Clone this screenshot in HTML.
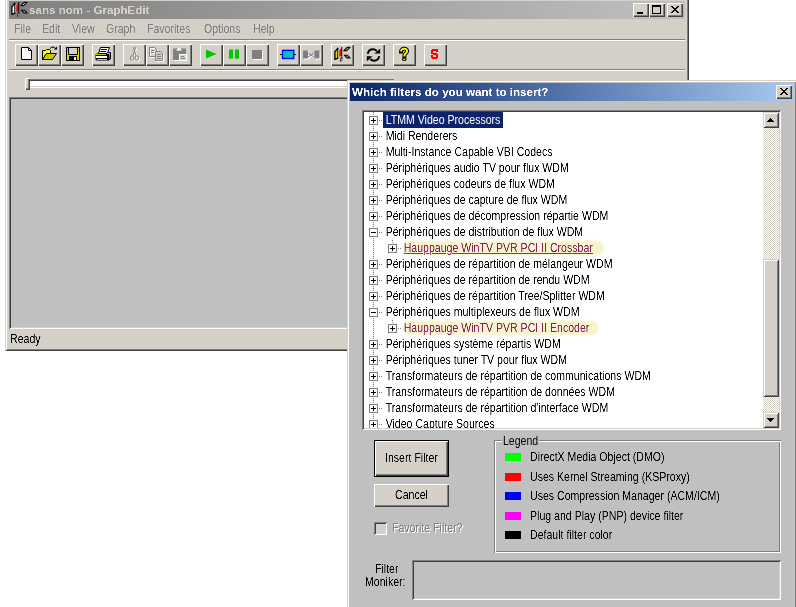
<!DOCTYPE html>
<html><head><meta charset="utf-8">
<style>
*{margin:0;padding:0;box-sizing:border-box}
html,body{width:796px;height:607px;overflow:hidden;background:#fff}
body{position:relative;font-family:"Liberation Sans",sans-serif;font-size:10.5px;color:#000}
.a{position:absolute}
.win{background:#D4D0C8;box-shadow:inset 1px 1px #D4D0C8,inset -1px -1px #404040,inset 2px 2px #fff,inset -2px -2px #808080}
.btn{background:#D4D0C8;box-shadow:inset 1px 1px #fff,inset -1px -1px #404040,inset -2px -2px #808080}
.sunk{box-shadow:inset 1px 1px #808080,inset -1px -1px #fff,inset 2px 2px #404040,inset -2px -2px #D4D0C8}
.t{position:absolute;white-space:nowrap;line-height:12px;font-size:12px;transform:scaleX(.881);transform-origin:0 0;filter:url(#c1)}
.cap{background:#D4D0C8;box-shadow:inset 1px 1px #fff,inset -1px -1px #404040,inset -2px -2px #808080}
.hl{position:absolute;left:0;right:0;height:1px}

.scr{background:repeating-conic-gradient(#D4D0C8 0 25%,#fff 0 50%) 0 0/2px 2px}
.tree{position:absolute;left:364px;top:112px;width:399px;height:316px;overflow:hidden;background:#fff}
.vl{position:absolute;width:1px;background:repeating-linear-gradient(to bottom,#808080 0 1px,transparent 1px 2px)}
.hd{position:absolute;height:1px;background:repeating-linear-gradient(to right,#808080 0 1px,transparent 1px 2px)}
.box{position:absolute;width:9px;height:9px;border:1px solid #808080;background:#fff}
.box i{position:absolute;left:1px;top:3px;width:5px;height:1px;background:#000}
.box i.pm:after{content:"";position:absolute;left:2px;top:-2px;width:1px;height:5px;background:#000}
.ti{position:absolute;white-space:nowrap;line-height:16px;height:16px;padding:0 3px 0 3px;font-size:12px;transform:scaleX(.881);transform-origin:0 0;filter:url(#c1)}
.ti.sel{background:#0A246A;color:#fff;left:19px}
.ti.hi{color:#84205E;text-decoration:underline;text-decoration-color:#9A2A78}
.yh{position:absolute;height:14px;background:#F7F3CC;border-radius:7px;filter:blur(1.2px)}
</style></head><body>
<svg width="0" height="0" style="position:absolute"><filter id="c1"><feComponentTransfer><feFuncA type="linear" slope="2" intercept="-0.5"/></feComponentTransfer></filter></svg>

<!-- GraphEdit main window -->
<div class="a win" style="left:5px;top:-3px;width:684px;height:354px"></div>
<div class="a" style="left:9px;top:1px;width:676px;height:18px;background:linear-gradient(to right,#808080,#C0C0C0)"></div>
<svg class="a" style="left:8px;top:-1px" width="23" height="22" viewBox="0 0 23 22"><path d="M3.9 7.6L6.9 4.2V14.2L3.9 15.4Z" fill="#fff" stroke="#000" stroke-width="1.3" stroke-linejoin="round"/><rect x="7.5" y="5.5" width="0.9" height="8" fill="#fff"/><path d="M8.3 6.6L10.4 4V12L8.3 13Z" fill="#FF0000"/><rect x="10.2" y="3" width="1" height="9.5" fill="#000"/><path d="M9.3 14L11.3 12.4V16.5L9.3 17.9Z" fill="#000"/><rect x="9.9" y="14.6" width="0.9" height="2" fill="#fff"/><path d="M12.8 6.6L16.2 3.4H19L15.6 6.6Z" fill="#E8E8E8" stroke="#000" stroke-width="1.1" stroke-linejoin="round"/><path d="M13.3 11.2H16.1L19 14H16.2Z" fill="#E8E8E8" stroke="#000" stroke-width="1.1" stroke-linejoin="round"/></svg>
<div class="t" style="left:29px;top:4px;font-weight:bold;font-size:11.6px;transform:none;color:#D4D0C8">sans nom - GraphEdit</div>
<div class="a cap" style="left:633px;top:3px;width:16px;height:14px"></div>
<div class="a cap" style="left:649px;top:3px;width:16px;height:14px"></div>
<div class="a cap" style="left:667px;top:3px;width:16px;height:14px"></div>

<!-- menu -->
<div class="t" style="left:14px;top:23px;color:#808080">File</div>
<div class="t" style="left:42px;top:23px;color:#808080">Edit</div>
<div class="t" style="left:72px;top:23px;color:#808080">View</div>
<div class="t" style="left:106px;top:23px;color:#808080">Graph</div>
<div class="t" style="left:147px;top:23px;color:#808080">Favorites</div>
<div class="t" style="left:204px;top:23px;color:#808080">Options</div>
<div class="t" style="left:253px;top:23px;color:#808080">Help</div>

<div class="a" style="left:9px;top:39px;width:676px;height:1px;background:#808080"></div>
<div class="a" style="left:9px;top:40px;width:676px;height:1px;background:#fff"></div>

<!-- toolbar buttons -->
<div class="a btn" style="left:15px;top:44px;width:23px;height:22px"></div>
<div class="a btn" style="left:38px;top:44px;width:23px;height:22px"></div>
<div class="a btn" style="left:61px;top:44px;width:23px;height:22px"></div>
<div class="a btn" style="left:92px;top:44px;width:23px;height:22px"></div>
<div class="a btn" style="left:123px;top:44px;width:23px;height:22px"></div>
<div class="a btn" style="left:146px;top:44px;width:23px;height:22px"></div>
<div class="a btn" style="left:169px;top:44px;width:23px;height:22px"></div>
<div class="a btn" style="left:200px;top:44px;width:23px;height:22px"></div>
<div class="a btn" style="left:223px;top:44px;width:23px;height:22px"></div>
<div class="a btn" style="left:246px;top:44px;width:23px;height:22px"></div>
<div class="a btn" style="left:277px;top:44px;width:23px;height:22px"></div>
<div class="a btn" style="left:300px;top:44px;width:23px;height:22px"></div>
<div class="a btn" style="left:331px;top:44px;width:23px;height:22px"></div>
<div class="a btn" style="left:362px;top:44px;width:23px;height:22px"></div>
<div class="a btn" style="left:393px;top:44px;width:23px;height:22px"></div>
<div class="a btn" style="left:424px;top:44px;width:23px;height:22px"></div>

<!-- ICONS -->
<svg class="a" style="left:15px;top:44px" width="23" height="22" viewBox="0 0 23 22"><path d="M6.5 3.5H13.5L16.5 6.5V15.5H6.5Z" fill="#fff" stroke="#000"/><path d="M13.5 3.5V6.5H16.5" fill="none" stroke="#000"/></svg>
<svg class="a" style="left:38px;top:44px" width="23" height="22" viewBox="0 0 23 22"><path d="M4.5 6.5H7.5L8.5 5.5H11.5L12.5 6.5V9.5H8.5L4.5 15.5Z" fill="#FFFF00" stroke="#000"/><path d="M4.5 15.5L8.5 9.5H18.5L14.5 15.5Z" fill="#C8C800" stroke="#000"/><path d="M12 4.5Q13.5 2 16.5 3.5L17.5 5" fill="none" stroke="#000"/><path d="M16 5.5H19V2.5Z" fill="#000"/></svg>
<svg class="a" style="left:61px;top:44px" width="23" height="22" viewBox="0 0 23 22"><rect x="5.5" y="3.5" width="13" height="13" fill="#D8D800" stroke="#000"/><rect x="8" y="4" width="8" height="6" fill="#D4D0C8"/><path d="M7.5 3.5V10.5H16.5V3.5" fill="none" stroke="#000"/><rect x="8" y="12" width="8" height="5" fill="#000"/><rect x="13" y="13" width="2" height="3" fill="#fff"/><rect x="17" y="4" width="1" height="1" fill="#fff"/></svg>
<svg class="a" style="left:92px;top:44px" width="23" height="22" viewBox="0 0 23 22"><path d="M8.5 3.5H17.5L15.5 9.5H6.5Z" fill="#fff" stroke="#000"/><path d="M9 5.5H15M8.3 7.5H14.3" stroke="#000"/><rect x="3.5" y="9.5" width="14" height="7" rx="1.5" fill="#000"/><rect x="4" y="10" width="10" height="1" fill="#B8D000"/><rect x="4" y="12" width="11" height="2" fill="#fff"/><rect x="5" y="15" width="10" height="1" fill="#B8D000"/><path d="M15 9L18.5 8.5V15L16 16" fill="none" stroke="#000"/><rect x="15" y="9" width="2" height="1" fill="#B8D000"/></svg>
<svg class="a" style="left:123px;top:44px" width="23" height="22" viewBox="0 0 23 22"><g transform="translate(1,1)" fill="#fff" stroke="#fff"><ellipse cx="9.2" cy="14" rx="1.8" ry="2.2" fill="none"/><ellipse cx="13.8" cy="14" rx="1.8" ry="2.2" fill="none"/><path d="M10 11.8L12.6 3.2M13 11.8L10.4 3.2" fill="none"/></g><g fill="#808080" stroke="#808080"><ellipse cx="9.2" cy="14" rx="1.8" ry="2.2" fill="none"/><ellipse cx="13.8" cy="14" rx="1.8" ry="2.2" fill="none"/><path d="M10 11.8L12.6 3.2M13 11.8L10.4 3.2" fill="none"/></g></svg>
<svg class="a" style="left:146px;top:44px" width="23" height="22" viewBox="0 0 23 22"><g transform="translate(1,1)" fill="#fff" stroke="#fff"><path d="M3.5 3.5H8.5L10.5 5.5V12.5H3.5Z" fill="none"/><path d="M9.5 7.5H14.5L16.5 9.5V16.5H9.5Z" fill="#D4D0C8"/><path d="M5 6.5H8M5 8.5H8M11 10.5H15M11 12.5H15M11 14.5H15" fill="none"/></g><g fill="#808080" stroke="#808080"><path d="M3.5 3.5H8.5L10.5 5.5V12.5H3.5Z" fill="none"/><path d="M9.5 7.5H14.5L16.5 9.5V16.5H9.5Z" fill="#D4D0C8"/><path d="M5 6.5H8M5 8.5H8M11 10.5H15M11 12.5H15M11 14.5H15" fill="none"/></g></svg>
<svg class="a" style="left:169px;top:44px" width="23" height="22" viewBox="0 0 23 22"><path d="M5 16.5H10" stroke="#fff"/><path d="M4 5.5Q4 4.5 5 4.5H17V16H4Z" fill="#808080"/><path d="M9.6 3.8H10.6L13.2 6.6H7Z" fill="#fff"/><rect x="10.5" y="10.5" width="7" height="6" fill="#D4D0C8" stroke="#fff"/><path d="M12 12.5H15M12 14.5H16" stroke="#808080"/><rect x="16" y="10" width="1" height="1" fill="#fff"/></svg>
<svg class="a" style="left:200px;top:44px" width="23" height="22" viewBox="0 0 23 22"><path d="M6 5.5L16.5 10L6 14.5Z" fill="#00C800"/></svg>
<svg class="a" style="left:223px;top:44px" width="23" height="22" viewBox="0 0 23 22"><rect x="6" y="5.5" width="4" height="9.2" fill="#00C800"/><rect x="12" y="5.5" width="4" height="9.2" fill="#00C800"/></svg>
<svg class="a" style="left:246px;top:44px" width="23" height="22" viewBox="0 0 23 22"><rect x="7" y="7" width="10" height="9" fill="#fff"/><rect x="6" y="6" width="10" height="9" fill="#808080"/></svg>
<svg class="a" style="left:277px;top:44px" width="23" height="22" viewBox="0 0 23 22"><path d="M3 10.5H19" stroke="#000"/><rect x="5.5" y="6.3" width="11.3" height="8.2" fill="#00C0C0" stroke="#0000FF" stroke-width="1.3"/></svg>
<svg class="a" style="left:300px;top:44px" width="23" height="22" viewBox="0 0 23 22"><g transform="translate(1,1)" fill="#fff" stroke="#fff"><rect x="3.5" y="7" width="4" height="7"/><rect x="15" y="7" width="4" height="7"/><path d="M8 9L14 13M8 13L14 9M7 11H8M14 11H15" fill="none"/></g><g fill="#808080" stroke="#808080"><rect x="3.5" y="7" width="4" height="7"/><rect x="15" y="7" width="4" height="7"/><path d="M8 9L14 13M8 13L14 9M7 11H8M14 11H15" fill="none"/></g></svg>
<svg class="a" style="left:331px;top:44px" width="23" height="22" viewBox="0 0 23 22"><path d="M3.9 7.6L6.9 4.2V14.2L3.9 15.4Z" fill="#E0E000" stroke="#000" stroke-width="1.3" stroke-linejoin="round"/><rect x="7.5" y="5.5" width="0.9" height="8" fill="#fff"/><path d="M8.3 6.6L10.4 4V12L8.3 13Z" fill="#FF0000"/><rect x="10.2" y="3" width="1" height="9.5" fill="#000"/><path d="M9.3 14L11.3 12.4V16.5L9.3 17.9Z" fill="#000"/><rect x="9.9" y="14.6" width="0.9" height="2" fill="#E0E000"/><path d="M12.8 6.6L16.2 3.4H19L15.6 6.6Z" fill="#C8D000" stroke="#000" stroke-width="1.1" stroke-linejoin="round"/><path d="M13.3 11.2H16.1L19 14H16.2Z" fill="#D8D8A0" stroke="#000" stroke-width="1.1" stroke-linejoin="round"/></svg>
<svg class="a" style="left:362px;top:44px" width="23" height="22" viewBox="0 0 23 22"><path d="M5.8 9.8C6.3 6.8 8.5 5.3 11 5.3C12.6 5.3 13.8 6 14.8 7" fill="none" stroke="#000" stroke-width="1.9"/><path d="M12.5 9.6H18.2V4.6Z" fill="#000"/><path d="M17.2 12.2C16.7 15.2 14.5 16.7 12 16.7C10.4 16.7 9.2 16 8.2 15" fill="none" stroke="#000" stroke-width="1.9"/><path d="M10.5 12.3H4.8V17.3Z" fill="#000"/></svg>
<svg class="a" style="left:393px;top:44px" width="23" height="22" viewBox="0 0 23 22"><path d="M8 7.6C8 5.6 9.5 4.6 11.1 4.6C12.9 4.6 14.1 5.7 14.1 7.3C14.1 9 11.4 9.6 11.4 11.6V12.6" fill="none" stroke="#000" stroke-width="3.9" stroke-linecap="square"/><path d="M8 7.6C8 5.6 9.5 4.6 11.1 4.6C12.9 4.6 14.1 5.7 14.1 7.3C14.1 9 11.4 9.6 11.4 11.6V12.6" fill="none" stroke="#FFFF00" stroke-width="1.9"/><ellipse cx="11.3" cy="15.3" rx="2.4" ry="1.6" fill="#000"/><rect x="10.4" y="14.6" width="1.8" height="1.4" fill="#FFFF00"/></svg>
<svg class="a" style="left:424px;top:44px" width="23" height="22" viewBox="0 0 23 22"><g fill="#FF0000" shape-rendering="crispEdges"><rect x="8" y="5" width="5" height="2"/><rect x="7" y="6" width="2" height="4"/><rect x="12" y="5" width="2" height="3"/><rect x="8" y="9" width="2" height="1"/><rect x="9" y="9" width="4" height="2"/><rect x="12" y="10" width="2" height="4"/><rect x="8" y="13" width="5" height="2"/><rect x="7" y="11" width="2" height="3"/></g></svg>
<!-- /ICONS -->
<div class="a" style="left:9px;top:69px;width:676px;height:1px;background:#808080"></div>
<div class="a" style="left:9px;top:70px;width:676px;height:1px;background:#fff"></div>

<!-- trackbar -->
<div class="a sunk" style="left:26px;top:79px;width:368px;height:9px;background:#fff"></div>
<div class="a btn" style="left:25px;top:78px;width:5px;height:12px"></div>

<!-- client area -->
<div class="a sunk" style="left:9px;top:97px;width:676px;height:232px;background:#C0C0C0"></div>
<div class="t" style="left:10px;top:333px">Ready</div>

<!-- Dialog -->
<div class="a win" style="left:347px;top:80px;width:450px;height:540px;background:#C0C0C0"></div>
<div class="a" style="left:350px;top:83px;width:444px;height:18px;background:linear-gradient(to right,#0A246A,#A6CAF0)"></div>
<div class="t" style="left:352px;top:86px;font-weight:bold;font-size:11.6px;transform:none;color:#fff">Which filters do you want to insert?</div>
<div class="a cap" style="left:776px;top:85px;width:16px;height:14px"></div>

<!-- tree -->
<div class="a sunk" style="left:362px;top:110px;width:419px;height:320px;background:#fff"></div>

<div class="tree">
<div class="yh" style="left:39px;top:129px;width:201px"></div>
<div class="yh" style="left:39px;top:209px;width:196px"></div>
<div class="vl" style="left:9px;top:0;height:316px"></div>
<div class="hd" style="left:15px;top:8px;width:4px"></div>
<div class="box" style="left:5px;top:4px"><i class="pm"></i></div>
<div class="ti sel" style="left:19px;top:0px">LTMM Video Processors</div>
<div class="hd" style="left:15px;top:24px;width:4px"></div>
<div class="box" style="left:5px;top:20px"><i class="pm"></i></div>
<div class="ti" style="left:19px;top:16px">Midi Renderers</div>
<div class="hd" style="left:15px;top:40px;width:4px"></div>
<div class="box" style="left:5px;top:36px"><i class="pm"></i></div>
<div class="ti" style="left:19px;top:32px">Multi-Instance Capable VBI Codecs</div>
<div class="hd" style="left:15px;top:56px;width:4px"></div>
<div class="box" style="left:5px;top:52px"><i class="pm"></i></div>
<div class="ti" style="left:19px;top:48px">Périphériques audio TV pour flux WDM</div>
<div class="hd" style="left:15px;top:72px;width:4px"></div>
<div class="box" style="left:5px;top:68px"><i class="pm"></i></div>
<div class="ti" style="left:19px;top:64px">Périphériques codeurs de flux WDM</div>
<div class="hd" style="left:15px;top:88px;width:4px"></div>
<div class="box" style="left:5px;top:84px"><i class="pm"></i></div>
<div class="ti" style="left:19px;top:80px">Périphériques de capture de flux WDM</div>
<div class="hd" style="left:15px;top:104px;width:4px"></div>
<div class="box" style="left:5px;top:100px"><i class="pm"></i></div>
<div class="ti" style="left:19px;top:96px">Périphériques de décompression répartie WDM</div>
<div class="hd" style="left:15px;top:120px;width:4px"></div>
<div class="box" style="left:5px;top:116px"><i class="mm"></i></div>
<div class="ti" style="left:19px;top:112px">Périphériques de distribution de flux WDM</div>
<div class="hd" style="left:34px;top:136px;width:4px"></div>
<div class="vl" style="left:28px;top:128px;height:4px"></div>
<div class="box" style="left:24px;top:132px"><i class="pm"></i></div>
<div class="ti hi" style="left:37px;top:128px">Hauppauge WinTV PVR PCI II Crossbar</div>
<div class="hd" style="left:15px;top:152px;width:4px"></div>
<div class="box" style="left:5px;top:148px"><i class="pm"></i></div>
<div class="ti" style="left:19px;top:144px">Périphériques de répartition de mélangeur WDM</div>
<div class="hd" style="left:15px;top:168px;width:4px"></div>
<div class="box" style="left:5px;top:164px"><i class="pm"></i></div>
<div class="ti" style="left:19px;top:160px">Périphériques de répartition de rendu WDM</div>
<div class="hd" style="left:15px;top:184px;width:4px"></div>
<div class="box" style="left:5px;top:180px"><i class="pm"></i></div>
<div class="ti" style="left:19px;top:176px">Périphériques de répartition Tree/Splitter WDM</div>
<div class="hd" style="left:15px;top:200px;width:4px"></div>
<div class="box" style="left:5px;top:196px"><i class="mm"></i></div>
<div class="ti" style="left:19px;top:192px">Périphériques multiplexeurs de flux WDM</div>
<div class="hd" style="left:34px;top:216px;width:4px"></div>
<div class="vl" style="left:28px;top:208px;height:4px"></div>
<div class="box" style="left:24px;top:212px"><i class="pm"></i></div>
<div class="ti hi" style="left:37px;top:208px;text-decoration:none">Hauppauge WinTV PVR PCI II Encoder</div>
<div class="hd" style="left:15px;top:232px;width:4px"></div>
<div class="box" style="left:5px;top:228px"><i class="pm"></i></div>
<div class="ti" style="left:19px;top:224px">Périphériques système répartis WDM</div>
<div class="hd" style="left:15px;top:248px;width:4px"></div>
<div class="box" style="left:5px;top:244px"><i class="pm"></i></div>
<div class="ti" style="left:19px;top:240px">Périphériques tuner TV pour flux WDM</div>
<div class="hd" style="left:15px;top:264px;width:4px"></div>
<div class="box" style="left:5px;top:260px"><i class="pm"></i></div>
<div class="ti" style="left:19px;top:256px">Transformateurs de répartition de communications WDM</div>
<div class="hd" style="left:15px;top:280px;width:4px"></div>
<div class="box" style="left:5px;top:276px"><i class="pm"></i></div>
<div class="ti" style="left:19px;top:272px">Transformateurs de répartition de données WDM</div>
<div class="hd" style="left:15px;top:296px;width:4px"></div>
<div class="box" style="left:5px;top:292px"><i class="pm"></i></div>
<div class="ti" style="left:19px;top:288px">Transformateurs de répartition d'interface WDM</div>
<div class="hd" style="left:15px;top:312px;width:4px"></div>
<div class="box" style="left:5px;top:308px"><i class="pm"></i></div>
<div class="ti" style="left:19px;top:304px">Video Capture Sources</div>
</div>
<!-- scrollbar -->
<div class="a scr" style="left:763px;top:112px;width:16px;height:316px"></div>
<div class="a win" style="left:763px;top:112px;width:16px;height:16px"></div>
<div class="a win" style="left:763px;top:259px;width:16px;height:138px"></div>
<div class="a win" style="left:763px;top:412px;width:16px;height:16px"></div>

<!-- buttons -->
<div class="a" style="left:374px;top:440px;width:75px;height:37px;background:#000"></div>
<div class="a btn" style="left:375px;top:441px;width:73px;height:35px"></div>
<div class="t" style="left:385px;top:452px">Insert Filter</div>
<div class="a btn" style="left:374px;top:484px;width:75px;height:23px"></div>
<div class="t" style="left:395px;top:489px">Cancel</div>

<!-- checkbox -->
<div class="a sunk" style="left:374px;top:522px;width:13px;height:13px;background:#D4D0C8"></div>
<div class="t" style="left:393px;top:523px;color:#fff">Favorite Filter?</div>
<div class="t" style="left:392px;top:522px;color:#808080">Favorite Filter?</div>

<!-- legend group -->
<div class="a" style="left:494px;top:440px;width:287px;height:113px;box-shadow:inset 1px 1px #808080,inset -1px -1px #fff,inset 2px 2px #fff,inset -2px -2px #808080"></div>
<div class="t" style="left:502px;top:435px;background:#C0C0C0;padding:0 1px">Legend</div>
<div class="a" style="left:505px;top:453px;width:16px;height:8px;background:#00FF00"></div>
<div class="a" style="left:505px;top:473px;width:16px;height:8px;background:#FF0000"></div>
<div class="a" style="left:505px;top:492px;width:16px;height:8px;background:#0000FF"></div>
<div class="a" style="left:505px;top:512px;width:16px;height:8px;background:#FF00FF"></div>
<div class="a" style="left:505px;top:531px;width:16px;height:8px;background:#000"></div>
<div class="t" style="left:530px;top:451px">DirectX Media Object (DMO)</div>
<div class="t" style="left:530px;top:471px">Uses Kernel Streaming (KSProxy)</div>
<div class="t" style="left:530px;top:490px">Uses Compression Manager (ACM/ICM)</div>
<div class="t" style="left:530px;top:510px">Plug and Play (PNP) device filter</div>
<div class="t" style="left:530px;top:529px">Default filter color</div>

<!-- moniker -->
<div class="t" style="left:375px;top:563px">Filter</div>
<div class="t" style="left:365px;top:576px">Moniker:</div>
<div class="a sunk" style="left:412px;top:560px;width:369px;height:40px;background:#C0C0C0"></div>

<!-- GLYPHS -->
<svg class="a" style="left:633px;top:3px" width="16" height="14" shape-rendering="crispEdges"><g fill="#000"><rect x="4" y="9" width="6" height="1"/><rect x="4" y="10" width="6" height="1"/></g></svg>
<svg class="a" style="left:649px;top:3px" width="16" height="14" shape-rendering="crispEdges"><g fill="#000"><rect x="3" y="2" width="9" height="1"/><rect x="3" y="3" width="9" height="1"/><rect x="3" y="4" width="1" height="1"/><rect x="11" y="4" width="1" height="1"/><rect x="3" y="5" width="1" height="1"/><rect x="11" y="5" width="1" height="1"/><rect x="3" y="6" width="1" height="1"/><rect x="11" y="6" width="1" height="1"/><rect x="3" y="7" width="1" height="1"/><rect x="11" y="7" width="1" height="1"/><rect x="3" y="8" width="1" height="1"/><rect x="11" y="8" width="1" height="1"/><rect x="3" y="9" width="1" height="1"/><rect x="11" y="9" width="1" height="1"/><rect x="3" y="10" width="9" height="1"/></g></svg>
<svg class="a" style="left:667px;top:3px" width="16" height="14" shape-rendering="crispEdges"><g fill="#000"><rect x="4" y="3" width="2" height="1"/><rect x="10" y="3" width="2" height="1"/><rect x="5" y="4" width="2" height="1"/><rect x="9" y="4" width="2" height="1"/><rect x="6" y="5" width="4" height="1"/><rect x="7" y="6" width="2" height="1"/><rect x="6" y="7" width="4" height="1"/><rect x="5" y="8" width="2" height="1"/><rect x="9" y="8" width="2" height="1"/><rect x="4" y="9" width="2" height="1"/><rect x="10" y="9" width="2" height="1"/></g></svg>
<svg class="a" style="left:776px;top:85px" width="16" height="14" shape-rendering="crispEdges"><g fill="#000"><rect x="4" y="3" width="2" height="1"/><rect x="10" y="3" width="2" height="1"/><rect x="5" y="4" width="2" height="1"/><rect x="9" y="4" width="2" height="1"/><rect x="6" y="5" width="4" height="1"/><rect x="7" y="6" width="2" height="1"/><rect x="6" y="7" width="4" height="1"/><rect x="5" y="8" width="2" height="1"/><rect x="9" y="8" width="2" height="1"/><rect x="4" y="9" width="2" height="1"/><rect x="10" y="9" width="2" height="1"/></g></svg>
<svg class="a" style="left:763px;top:112px" width="16" height="16" shape-rendering="crispEdges"><g fill="#000"><rect x="7" y="6" width="1" height="1"/><rect x="6" y="7" width="3" height="1"/><rect x="5" y="8" width="5" height="1"/><rect x="4" y="9" width="7" height="1"/></g></svg>
<svg class="a" style="left:763px;top:412px" width="16" height="16" shape-rendering="crispEdges"><g fill="#000"><rect x="4" y="6" width="7" height="1"/><rect x="5" y="7" width="5" height="1"/><rect x="6" y="8" width="3" height="1"/><rect x="7" y="9" width="1" height="1"/></g></svg>
<!-- /GLYPHS -->
</body></html>
